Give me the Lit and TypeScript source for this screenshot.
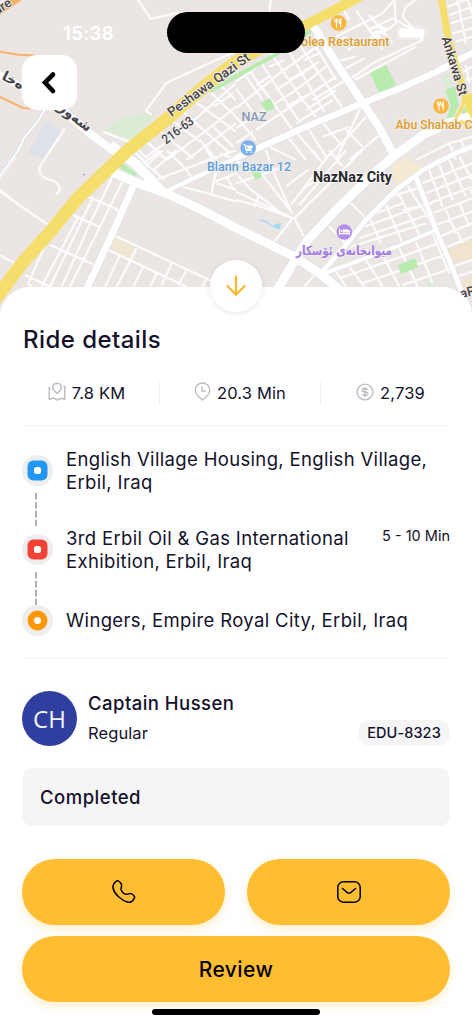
import { LitElement, html, css, svg } from "lit";
import { customElement, property } from "lit/decorators.js";

const mainRoads = [
  { d: "M-3 74L22 87L60 108L88 132L123 158", w: 8 },
  { d: "M110 145L136 164L163 193", w: 10 },
  { d: "M112 172L140 184L165 193L200 209L236 228L293 256L319 273L340 290", w: 9 },
  { d: "M135 182L113 232L86 290", w: 7 },
  { d: "M167 191L207 172L236 158L303 128", w: 4.5 },
  { d: "M236 158L303 128L363 103L403 87L436 72L474 52", w: 6.5 },
  { d: "M313 25L336 63L363 103L379 127L394 155", w: 8 },
  { d: "M474 115L449 123L423 135L394 156L369 178L336 210L306 242L277 290", w: 9 },
  { d: "M474 146L456 153L423 170L396 190L366 220L346 245L321 273", w: 5 },
  { d: "M415 174L436 230L449 260L462 293L470 310", w: 5 },
  { d: "M323 274L396 247L436 230", w: 4 },
];

// street grids, one path per 236px tile, drawn at three times map scale
const tiles = [
  {
    x: 0,
    y: 0,
    d: `M410-5L432 25L452 57L535 38M708 155L660 175L500 248L438 332L455 345
      M195 385L132 480M310 395L400 430M415 450L440 475M400 455L432 480
      M440 425L500 480M480 395L580 475M515 360L600 425M548 335L690 460M585 305L708 395
      M630 275L708 350M660 255L708 300M440 470L560 380L708 250M500 480L640 375L708 320
      M560 480L708 370M590 300L550 340M700 280L640 320M600 420L650 480M640 380L700 440`,
  },
  {
    x: 236,
    y: 0,
    d: `M105-5L100 38M0 245L110 165L220 95M0 325L130 220L250 135M0 385L180 270L270 200
      M60 390L300 230M0 430L50 395M35 205L120 320L170 390M70 180L190 365M105 160L200 300L240 350
      M150 140L265 335M185 125L320 325M20 215L80 300M0 265L60 350M0 350L60 420
      M230 125L300 240M205 180L250 160M100 200L145 180M60 255L100 230M150 320L250 265
      M180 370L290 300M120 270L230 200M160 240L250 185M210 330L300 270M230 300L330 240
      M300 110L440 40L475 0M270 140L330 110M335 150L460 85L480 70L475 0L500-5
      M300 185L360 170M320 210L385 175M345 235L410 190L560 120L500 50L510 20L545-5
      M355 240L540 140M320 25L340 60M360 30L440 150M400 45L470 130M430 75L470 55L525 85
      M380 310L300 480M400 340L345 400L265 480M430 405L340 480M250 355L320 440M210 375L270 470
      M180 395L250 480M155 410L210 480M260 410L340 380M100 440L180 480M330 390L380 440
      M635 20L700-5M640 45L708 20M645 70L708 50M650 100L708 85M660 125L708 110M665 0L690 130
      M695 0L708 40M680 215L708 200M690 240L708 235M690 195L700 250
      M540 480L640 430L708 410M600 480L708 440M640 430L660 480M675 420L690 460`,
  },
  {
    x: 0,
    y: 150,
    d: `M155-5L120 50Q110 80 160 92Q195 115 168 132M0 120L50 158M0 125L145 225M0 315L75 358
      M48 20L0 85M340 75L275 210L185 410M370 90L300 230L210 410M280 140L150 410
      M235 200L125 410M200 190L140 275L85 400L95 410M265 140L355 180M220 195L300 232
      M150 285L280 343M75 375L150 410M330 70L400 100
      M340 255L500 330L640 395M325 300L560 410M410 295L350 410M360 315L315 410M430 350L400 410
      M470 370L450 410M515 340L485 405M560 360L535 405M620 385L605 415
      M400 0L440 45L495 90M440 45L490 0M500 0L560 60L580 90M460 60L530 0
      M440 100L560 55L708 0M425 45L480 0M620 0L640 35L650 60M660 10L708 30
      M540 108L640 135L708 155M650 60L640 100L635 130M650 100L708 120M680 80L700 118M645 95L708 70`,
  },
  {
    x: 236,
    y: 150,
    d: `M0 125L170 205L115 275M0 150L60 165L170 205M70 135L55 170M0 70L40 115L130 185
      M60 50L170 190M90 0L110 60L165 185M0 35L60 50M0 100L130 55M165 165L290 0M175 205L380 0
      M190 165L330 0M175 205L215 280M230 0L260 40M280 0L320 50M150 110L215 60M200 120L240 90
      M345 160L390 205M280 230L330 280M235 375L205 410M400 200L435 280M450 165L500 280
      M485 125L550 255M510 100L600 240M385 230L550 170M370 265L575 195M345 290L570 220
      M420 190L500 160M465 140L560 110M500 180L590 160M330 315L400 300
      M300 365L330 410M340 350L385 410M390 330L440 410M440 315L490 410M490 295L545 410
      M540 275L590 400M590 250L640 370M310 385L440 340L620 275M380 400L480 365L640 310
      M500 405L660 350M560 100L708 40M570 130L708 75M580 160L708 110M590 190L708 145
      M600 225L708 185M610 260L708 220M625 295L708 260M650 350L708 330M660 380L708 365
      M580 60L620 170M610 45L650 150M640 30L690 140M670 20L708 90M630 180L660 250M670 160L700 230
      M700 110L708 130M665 245L680 280M450 0L470 15`,
  },
];

const greens = [
  "M103 130L125 117L153 112L155 116L130 142Z",
];

const brightGreens = [
  "M209 91L236 74L273 54L311 28L311 33L275 57L236 79L211 93Z",
  "M370 73L386 65L396 85L379 92Z",
  "M261 103L270 98L275 108L266 112Z",
  "M252 171L260 170L262 177L255 180Z",
  "M398 265L415 258L418 267L401 274Z",
  "M118 167L122 163L137 174L134 176Z",
  "M445 90L455 86L459 105L453 118L446 121L451 105Z",
  "M460 112L467 106L466 114Z",
];

@customElement("city-map")
export class CityMap extends LitElement {
  static override styles = css`
    :host {
      display: block;
      height: 100%;
    }

    svg {
      display: block;
    }

    .road {
      fill: none;
      stroke: #fff;
      stroke-linejoin: round;
    }

    .casing {
      fill: none;
      stroke: #d8dce6;
      stroke-linejoin: round;
    }

    .streets {
      fill: none;
      stroke: #fdfcfc;
      stroke-width: 6.5;
      stroke-linejoin: round;
    }

    .highway {
      fill: none;
      stroke: #f6de6c;
      stroke-linejoin: round;
    }

    .orange {
      fill: none;
      stroke: #fbb168;
      stroke-width: 2;
    }

    text {
      font-family: Roboto, "Noto Sans", "DejaVu Sans", sans-serif;
      font-weight: 500;
      paint-order: stroke;
      stroke: #f4f0ed;
      stroke-width: 1.6px;
      stroke-linejoin: round;
    }

    .street-name {
      fill: #43434a;
      font-size: 13px;
    }

    .food {
      fill: #dc9d2e;
      font-size: 12.5px;
    }

    .shop {
      fill: #5b9ddf;
      font-size: 12.5px;
    }

    .area {
      fill: #8598b9;
      font-size: 13px;
    }

    .city {
      fill: #27272a;
      font-size: 14px;
      font-weight: 700;
      stroke: #fff;
      stroke-width: 1.6px;
    }

    .hotel {
      fill: #a47ee6;
      font-family: "DejaVu Sans", sans-serif;
      font-size: 13px;
      font-weight: 700;
    }

    .kurdish {
      font-family: "DejaVu Sans", sans-serif;
      font-size: 13.5px;
      font-weight: 700;
    }
  `;

  restaurant(x: number, y: number) {
    return svg`
      <g transform="translate(${x} ${y})">
        <circle r="7.8" fill="#f9b540"></circle>
        <path d="M-2 -4.5V4.5M-3.6 -4.5V-1.5Q-2 0.5 -0.5 -1.5V-4.5M2.2 4.5V-4.3Q0.7 -3 1 0.5H2.2"
          fill="none" stroke="#fff" stroke-width="1.1"></path>
      </g>`;
  }

  override render() {
    return html`
      <svg width="472" height="315" viewBox="0 0 472 315">
        <rect width="472" height="315" fill="#ebe6e4"></rect>
        ${greens.map((d) => svg`<path d=${d} fill="#dcebd6"></path>`)}
        <path d="M441 78L449 73L452 84L444 88Z" fill="#dcebd6"></path>
        <path d="M425 280L432 277L435 287H427Z" fill="#dcebd6"></path>
        <path d="M46 121L62 132L47 160L28 153Z" fill="#dfe1ea"></path>
        <path d="M114 237L136 247L130 259L108 248Z" fill="#f0e6d4"></path>
        <path d="M390 168L405 157L416 165L423 163V173L396 185Z" fill="#f4ead2"></path>
        ${tiles.map(
          (t) => svg`
            <g transform="translate(${t.x} ${t.y}) scale(0.33333)">
              <svg width="708" height="480" viewBox="0 0 708 480">
                <path class="streets" d=${t.d}></path>
              </svg>
            </g>`
        )}
        <path d="M448 249L474 239V258L453 264Z" fill="#f0e4cf"></path>
        <path d="M460 281L474 275V290H463Z" fill="#f0e4cf"></path>
        ${brightGreens.map((d) => svg`<path d=${d} fill="#b8ebae"></path>`)}
        <path d="M84 129L97 140" stroke="#c9e9c2" stroke-width="2"></path>
        <path class="casing" stroke-width="3.6" d="M45 109L38 121L24 138L18 151L0 176"></path>
        <path class="road" stroke-width="2" d="M45 109L38 121L24 138L18 151L0 176"></path>
        <path d="M257 220Q264 218 269 223Q273 227 276 224L281 223L280 229Q276 229 271 226Q265 221 257 220Z"
          fill="#a0daf9"></path>
        ${mainRoads.map((r) => svg`<path class="casing" stroke-width=${r.w + 1} d=${r.d}></path>`)}
        ${mainRoads.map((r) => svg`<path class="road" stroke-width=${r.w} d=${r.d}></path>`)}
        <path class="orange" d="M-1 51.5L17 54.500L40 56M-1 96.500L23 108L43 108.500"></path>
        <path d="M-4 13L22 -5" stroke="#fbb168" stroke-width="8"></path>
        <path class="highway" stroke-width="13"
          d="M-8 304L23 262L50 232L77 199L127 151L167 119L205 86L236 62L260 48"></path>
        <path class="highway" stroke-width="10" d="M250 54L300 28L333 11L364 -6"></path>
        <path class="highway" stroke-width="7" d="M441 -3L448 37L458 73L467 100L475 118"></path>
        <path class="highway" stroke-width="3" d="M464 90L463 105L455 120M460 121L474 128"></path>
        <path d="M464 98L474 92V122L466 110Z" fill="#f6de6c"></path>
        <path d="M82.500 174.500H85.500M84 173V176" stroke="#b3bdd6" stroke-width="1"></path>

        ${this.restaurant(338.5, 23)} ${this.restaurant(441, 106)}
        <circle cx="248.200" cy="148" r="7.800" fill="#79b2ec"></circle>
        <path d="M243.300 144.500H245L246 150.500H252M245.500 146H252.500L251.500 149H246"
          fill="#fff" stroke="#fff" stroke-width="1"></path>
        <circle cx="246.800" cy="152.300" r="0.800" fill="#fff"></circle>
        <circle cx="251.200" cy="152.300" r="0.800" fill="#fff"></circle>
        <circle cx="344.300" cy="232" r="7.800" fill="#b08eea"></circle>
        <path d="M339.500 228.500V235M339.500 233.700H349.500V235M349.500 233V231L343.500 230V232.500"
          fill="none" stroke="#fff" stroke-width="1.200"></path>
        <path d="M343 229.500H347.500Q349.500 229.500 349.500 232.500H343Z" fill="#fff"></path>
        <circle cx="341.500" cy="230.800" r="1.100" fill="#fff"></circle>

        <text class="food" x="301" y="46" textLength="88.500" lengthAdjust="spacingAndGlyphs">olea Restaurant</text>
        <text class="food" x="395.500" y="129" textLength="77" lengthAdjust="spacingAndGlyphs">Abu Shahab C</text>
        <text class="area" x="241.500" y="121" textLength="25" lengthAdjust="spacingAndGlyphs">NAZ</text>
        <text class="shop" x="207" y="171.200" textLength="84" lengthAdjust="spacingAndGlyphs">Blann Bazar 12</text>
        <text class="city" x="313" y="182" textLength="79" lengthAdjust="spacingAndGlyphs">NazNaz City</text>
        <text class="hotel" x="296" y="255" textLength="96" lengthAdjust="spacingAndGlyphs">میوانخانەی ئۆسکار</text>
        <text class="street-name" transform="translate(171.500 117) rotate(-36)" textLength="98"
          lengthAdjust="spacingAndGlyphs">Peshawa Qazi St</text>
        <text class="street-name" transform="translate(166 144.500) rotate(-37)" textLength="36"
          lengthAdjust="spacingAndGlyphs">216-63</text>
        <text class="street-name" transform="translate(441.500 38) rotate(73)" textLength="61"
          lengthAdjust="spacingAndGlyphs">Ankawa St</text>
        <text class="street-name kurdish" transform="translate(54 107) rotate(37)">شەوق</text>
        <text class="street-name kurdish" transform="translate(1 79) rotate(28)">ەخا</text>
        <text class="street-name" transform="translate(-3 15) rotate(-33)">are</text>
        <text class="street-name" transform="translate(458 299) rotate(-14)">ıaR</text>
      </svg>
    `;
  }
}

const stopIcon = (color: string, radius: number) => html`
  <svg class="stop" width="31" height="31" viewBox="0 0 31 31">
    <circle cx="15.500" cy="15.500" r="15.500" fill="#eeeeee"></circle>
    <rect x="5.500" y="5.500" width="20" height="20" rx=${radius} fill=${color}></rect>
    <rect x="12" y="12" width="7" height="7" rx=${radius / 3 + 0.5} fill="#fff"></rect>
  </svg>
`;

const dashes = html`
  <svg class="dashes" width="2" height="33" viewBox="0 0 2 33">
    <path d="M1 0V33" stroke="#a3a3a3" stroke-width="1.700" stroke-dasharray="6.600 2.300"></path>
  </svg>
`;

@customElement("app-root")
export class AppRoot extends LitElement {
  static override styles = css`
    :host {
      display: block;
      position: relative;
      width: 472px;
      height: 1024px;
      overflow: hidden;
      background: #fff;
      color: #14122b;
      font-family: Inter, "Liberation Sans", sans-serif;
    }

    * {
      box-sizing: border-box;
    }

    .map {
      height: 287px;
    }

    .status-bar {
      position: absolute;
      top: 0;
      left: 0;
      width: 100%;
      height: 65px;
      display: flex;
      align-items: center;
      color: #fff;
      padding: 0 44px 0 63px;
    }

    .time {
      width: 104px;
      font-size: 18.5px;
      font-weight: 600;
      letter-spacing: 0.4px;
    }

    .island {
      width: 138px;
      height: 41px;
      border-radius: 21px;
      background: #000;
    }

    .signals {
      margin-left: auto;
    }

    .back {
      position: absolute;
      top: 55px;
      left: 22px;
      width: 55px;
      height: 55px;
      border: 0;
      padding: 0;
      border-radius: 15px;
      background: #fff;
    }

    .sheet {
      position: relative;
      height: 737px;
      padding: 37px 22px 0;
      border-radius: 30px 30px 0 0;
      background: #fff;
    }

    .collapse {
      position: absolute;
      top: -27px;
      left: 210px;
      width: 52px;
      height: 52px;
      border: 0;
      padding: 0;
      border-radius: 50%;
      background: #fff;
      box-shadow: 0 1px 6px rgba(0, 0, 0, 0.1);
    }

    .back svg,
    .collapse svg {
      display: block;
      margin: auto;
    }

    h1 {
      margin: 0;
      padding-left: 1px;
      font-size: 24px;
      line-height: 32px;
      font-weight: 550;
      letter-spacing: 0.45px;
    }

    .stats {
      display: grid;
      grid-template-columns: 137px 161px 1fr;
      align-items: center;
      height: 70px;
      border-bottom: 1px solid #f1f1f1;
      font-size: 16.500px;
      letter-spacing: 0.15px;
    }

    .stat {
      display: flex;
      align-items: center;
      justify-content: center;
      gap: 6px;
      height: 22px;
      margin-top: 4px;
    }

    .stat svg {
      margin-top: -2px;
    }

    .stat:nth-child(1) {
      padding-right: 8px;
    }

    .stat:nth-child(3) {
      padding-left: 10px;
    }

    .stat + .stat {
      border-left: 1px solid #efefef;
    }

    .route {
      height: 233px;
      padding-top: 22px;
      border-bottom: 2px solid #f8f8f8;
      display: grid;
      grid-template-columns: 44px 1fr auto;
      grid-template-rows: 79px 79px 31px;
      font-size: 18.500px;
      line-height: 23px;
      letter-spacing: 0.34px;
    }

    .marker {
      padding-top: 7px;
    }

    .marker.last {
      padding-top: 0;
    }

    .stop {
      display: block;
    }

    .dashes {
      display: block;
      margin: 7px 0 0 13px;
    }

    .wide {
      grid-column: span 2;
      white-space: nowrap;
    }

    .last {
      margin-top: -2px;
      align-self: center;
    }

    .wait {
      font-size: 14.500px;
      line-height: 17px;
      letter-spacing: 0;
    }

    .captain {
      display: flex;
      gap: 11px;
      height: 55px;
      margin-top: 32px;
    }

    .avatar {
      width: 55px;
      height: 55px;
      border-radius: 50%;
      background: #303f9f;
      color: #f2f3fb;
      font: 400 24px/56px "Open Sans", "Noto Sans", sans-serif;
      text-align: center;
    }

    .who {
      flex: 1;
    }

    .name {
      font-size: 18.500px;
      line-height: 24px;
      font-weight: 500;
      letter-spacing: 0.46px;
    }

    .kind {
      margin-top: 8px;
      font-size: 16.500px;
      line-height: 21px;
      letter-spacing: 0.1px;
    }

    .plate {
      align-self: flex-end;
      width: 92px;
      height: 26px;
      border-radius: 13px;
      background: #f5f5f5;
      font-size: 14.500px;
      line-height: 26px;
      font-weight: 500;
      letter-spacing: 0.1px;
      text-align: center;
    }

    .state {
      height: 58px;
      margin-top: 22px;
      padding: 0 18px;
      border-radius: 11px;
      background: #f5f5f5;
      font-size: 18.500px;
      line-height: 58px;
      font-weight: 500;
      letter-spacing: 0.5px;
    }

    .actions {
      display: grid;
      grid-template-columns: 1fr 1fr;
      gap: 11px 22px;
      margin-top: 33px;
    }

    .actions button {
      display: flex;
      align-items: center;
      justify-content: center;
      height: 66px;
      padding: 0;
      border: 0;
      border-radius: 33px;
      background: #ffbd31;
      box-shadow: 0 4px 9px rgba(255, 189, 49, 0.25);
      color: #000;
      font: 550 21px/1 Inter, "Liberation Sans", sans-serif;
      letter-spacing: 0.4px;
    }

    .actions .review {
      grid-column: span 2;
    }

    .home {
      width: 168px;
      height: 6px;
      margin: 7px auto 0;
      border-radius: 3px;
      background: #000;
      position: relative;
    }
  `;

  @property()
  captain = "Captain Hussen";

  override render() {
    return html`
      <div class="map"><city-map></city-map></div>
      ${this.renderStatusBar()}
      <button class="back" aria-label="Back">
        <svg width="55" height="55" viewBox="0 0 55 55">
          <path d="M31 19.500L23 27.500L31 36" fill="none" stroke="#000" stroke-width="4.600"
            stroke-linecap="round" stroke-linejoin="miter"></path>
        </svg>
      </button>
      <div class="sheet">
        <button class="collapse" aria-label="Collapse">
          <svg width="52" height="52" viewBox="0 0 52 52">
            <path d="M26 16.500V34.500M17.500 26L26 34.700L34.500 26" fill="none" stroke="#fdb82e"
              stroke-width="2.200" stroke-linecap="round" stroke-linejoin="round"></path>
          </svg>
        </button>
        <h1>Ride details</h1>
        ${this.renderStats()} ${this.renderRoute()}
        <div class="captain">
          <div class="avatar">CH</div>
          <div class="who">
            <div class="name">${this.captain}</div>
            <div class="kind">Regular</div>
          </div>
          <div class="plate">EDU-8323</div>
        </div>
        <div class="state">Completed</div>
        ${this.renderActions()}
        <div class="home"></div>
      </div>
    `;
  }

  renderStatusBar() {
    return html`
      <div class="status-bar">
        <span class="time">15:38</span>
        <div class="island"></div>
        <svg class="signals" width="62" height="20" viewBox="0 0 62 20">
          <g fill="none" stroke="#fff" stroke-width="2.600">
            <path d="M2.500 7.500Q12 -0.500 21.500 7.500"></path>
            <path d="M6 11.300Q12 6 18 11.300"></path>
          </g>
          <path d="M8.800 13.500Q12 10.800 15.200 13.500L12 17Z" fill="#fff"></path>
          <rect x="31.500" y="4" width="28" height="12" rx="4" fill="none" stroke="#fff"
            stroke-opacity="0.500"></rect>
          <rect x="33" y="5.500" width="25" height="9" rx="2.500" fill="#fff"></rect>
          <path d="M61 8V12" stroke="#fff" stroke-opacity="0.500"></path>
        </svg>
      </div>
    `;
  }

  renderStats() {
    return html`
      <div class="stats">
        <div class="stat">
          <svg width="18" height="19" viewBox="0 0 18 19">
            <g fill="none" stroke="#bdbcc4" stroke-width="1.400" stroke-linejoin="round">
              <path d="M9 1.200Q4.600 1.500 4.600 5.700Q5 8.500 9 11.500Q13 8.500 13.400 5.700Q13.400 1.500 9 1.200Z"></path>
              <path d="M2.500 5.800L1.200 5.500V17.500L5.500 16L9.500 18L13 16.300L16.800 17.300V4.300L15.500 3.800"></path>
            </g>
          </svg>
          7.8 KM
        </div>
        <div class="stat">
          <svg width="17" height="19" viewBox="0 0 17 19">
            <g fill="none" stroke="#bdbcc4" stroke-width="1.400">
              <path d="M8.500 18L3.300 13.200A7.200 7.200 0 1 1 13.700 13.200Z" stroke-linejoin="round"></path>
              <path d="M8 4.500V9H12"></path>
            </g>
          </svg>
          20.3 Min
        </div>
        <div class="stat">
          <svg width="18" height="18" viewBox="0 0 18 18">
            <g fill="none" stroke="#bdbcc4" stroke-width="1.400">
              <circle cx="9" cy="9" r="7.900"></circle>
              <path d="M11.800 6.800Q11 5.500 9 5.500Q6.200 5.500 6.200 7.200Q6.200 8.800 9 9Q11.900 9.200 11.900 10.800Q11.900 12.500 9 12.500Q6.800 12.500 6 11M9 4V14"></path>
            </g>
          </svg>
          2,739
        </div>
      </div>
    `;
  }

  renderRoute() {
    return html`
      <div class="route">
        <div class="marker">${stopIcon("#2196f3", 6)} ${dashes}</div>
        <div class="wide">English Village Housing, English Village,<br />Erbil, Iraq</div>
        <div class="marker">${stopIcon("#f44336", 6)} ${dashes}</div>
        <div>3rd Erbil Oil &amp; Gas International<br />Exhibition, Erbil, Iraq</div>
        <div class="wait">5 - 10 Min</div>
        <div class="marker last">${stopIcon("#ff9800", 10)}</div>
        <div class="wide last">Wingers, Empire Royal City, Erbil, Iraq</div>
      </div>
    `;
  }

  renderActions() {
    return html`
      <div class="actions">
        <button aria-label="Call">
          <svg width="24" height="24" viewBox="0 0 24 24">
            <path d="M1 8C0.500 4 2.500 2.500 4.500 1C6 0.200 7.500 1.200 9 3.500C10.800 6 8.500 8 9 9.500C9.800 11.500 12 14 14 14.300C16 14.800 17.500 12.300 20 14C22.500 15.800 23.300 17 22 18.800C20.500 21.500 19 22.800 16 22.200C9.500 20.500 2.200 14 1 8Z"
              fill="none" stroke="#000" stroke-width="1.500"></path>
          </svg>
        </button>
        <button aria-label="Message">
          <svg width="24" height="22" viewBox="0 0 24 22">
            <rect x="0.800" y="0.800" width="22.400" height="20.400" rx="5.500" fill="none" stroke="#000"
              stroke-width="1.500"></rect>
            <path d="M5.500 7.500L10 11.300Q12 12.800 14 11.300L18.500 7.500" fill="none" stroke="#000"
              stroke-width="1.500" stroke-linecap="round"></path>
          </svg>
        </button>
        <button class="review">Review</button>
      </div>
    `;
  }
}
